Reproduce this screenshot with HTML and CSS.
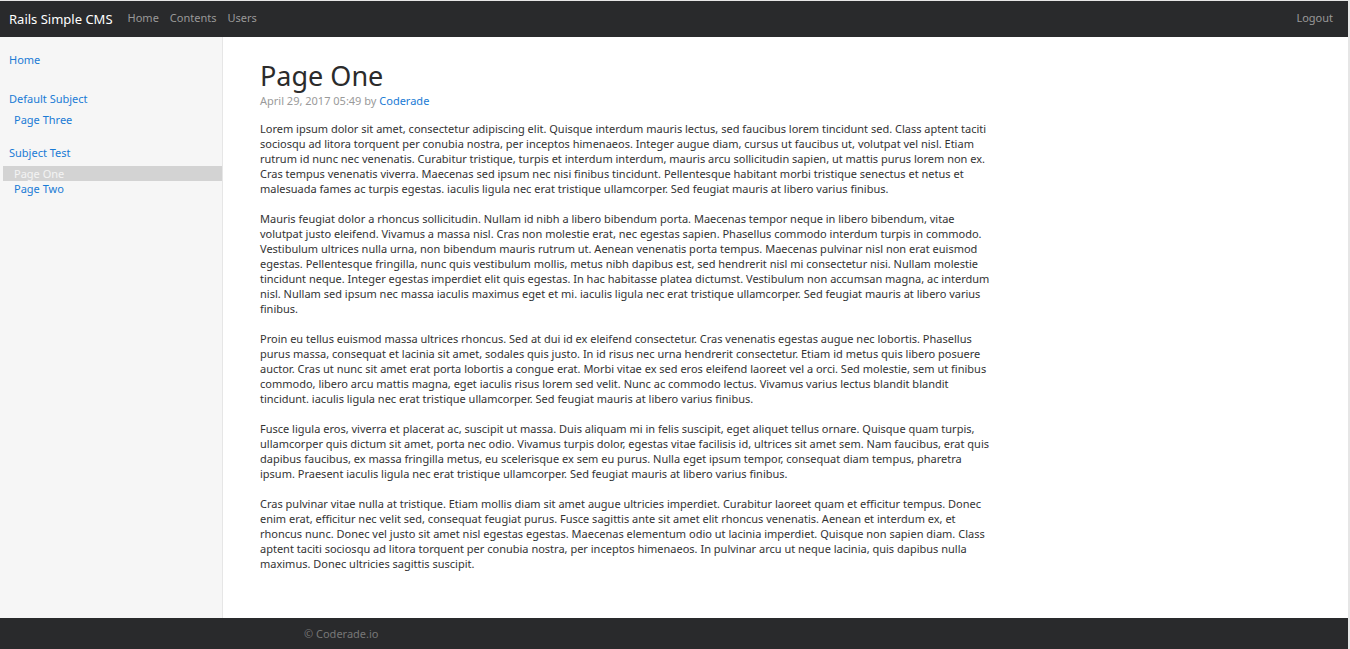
FILE: index.html
```html
<!DOCTYPE html>
<html>
<head>
<meta charset="utf-8">
<title>Rails Simple CMS</title>
<link rel="stylesheet" href="styles.css">
</head>
<body>
<div class="frame">
  <header class="navbar">
    <div class="nav-left">
      <a class="brand" href="#">Rails Simple CMS</a>
      <nav class="nav-links">
        <a href="#">Home</a>
        <a href="#">Contents</a>
        <a href="#">Users</a>
      </nav>
    </div>
    <a class="logout" href="#">Logout</a>
  </header>
  <div class="body-row">
    <aside class="sidebar">
      <a class="side-top" href="#">Home</a>
      <div class="subject">
        <a class="subject-title" href="#">Default Subject</a>
        <a class="page-link" href="#">Page Three</a>
      </div>
      <div class="subject">
        <a class="subject-title" href="#">Subject Test</a>
        <a class="page-link active" href="#">Page One</a>
        <a class="page-link" href="#">Page Two</a>
      </div>
    </aside>
    <main class="content">
      <h1 class="title">Page One</h1>
      <div class="meta">April 29, 2017 05:49 by <a href="#">Coderade</a></div>
      <article class="text">
        <p>Lorem ipsum dolor sit amet, consectetur adipiscing elit. Quisque interdum mauris lectus, sed faucibus lorem tincidunt sed. Class aptent taciti sociosqu ad litora torquent per conubia nostra, per inceptos himenaeos. Integer augue diam, cursus ut faucibus ut, volutpat vel nisl. Etiam rutrum id nunc nec venenatis. Curabitur tristique, turpis et interdum interdum, mauris arcu sollicitudin sapien, ut mattis purus lorem non ex. Cras tempus venenatis viverra. Maecenas sed ipsum nec nisi finibus tincidunt. Pellentesque habitant morbi tristique senectus et netus et malesuada fames ac turpis egestas. iaculis ligula nec erat tristique ullamcorper. Sed feugiat mauris at libero varius finibus.</p>
        <p>Mauris feugiat dolor a rhoncus sollicitudin. Nullam id nibh a libero bibendum porta. Maecenas tempor neque in libero bibendum, vitae volutpat justo eleifend. Vivamus a massa nisl. Cras non molestie erat, nec egestas sapien. Phasellus commodo interdum turpis in commodo. Vestibulum ultrices nulla urna, non bibendum mauris rutrum ut. Aenean venenatis porta tempus. Maecenas pulvinar nisl non erat euismod egestas. Pellentesque fringilla, nunc quis vestibulum mollis, metus nibh dapibus est, sed hendrerit nisl mi consectetur nisi. Nullam molestie tincidunt neque. Integer egestas imperdiet elit quis egestas. In hac habitasse platea dictumst. Vestibulum non accumsan magna, ac interdum nisl. Nullam sed ipsum nec massa iaculis maximus eget et mi. iaculis ligula nec erat tristique ullamcorper. Sed feugiat mauris at libero varius finibus.</p>
        <p>Proin eu tellus euismod massa ultrices rhoncus. Sed at dui id ex eleifend consectetur. Cras venenatis egestas augue nec lobortis. Phasellus purus massa, consequat et lacinia sit amet, sodales quis justo. In id risus nec urna hendrerit consectetur. Etiam id metus quis libero posuere auctor. Cras ut nunc sit amet erat porta lobortis a congue erat. Morbi vitae ex sed eros eleifend laoreet vel a orci. Sed molestie, sem ut finibus commodo, libero arcu mattis magna, eget iaculis risus lorem sed velit. Nunc ac commodo lectus. Vivamus varius lectus blandit blandit tincidunt. iaculis ligula nec erat tristique ullamcorper. Sed feugiat mauris at libero varius finibus.</p>
        <p>Fusce ligula eros, viverra et placerat ac, suscipit ut massa. Duis aliquam mi in felis suscipit, eget aliquet tellus ornare. Quisque quam turpis, ullamcorper quis dictum sit amet, porta nec odio. Vivamus turpis dolor, egestas vitae facilisis id, ultrices sit amet sem. Nam faucibus, erat quis dapibus faucibus, ex massa fringilla metus, eu scelerisque ex sem eu purus. Nulla eget ipsum tempor, consequat diam tempus, pharetra ipsum. Praesent iaculis ligula nec erat tristique ullamcorper. Sed feugiat mauris at libero varius finibus.</p>
        <p>Cras pulvinar vitae nulla at tristique. Etiam mollis diam sit amet augue ultricies imperdiet. Curabitur laoreet quam et efficitur tempus. Donec enim erat, efficitur nec velit sed, consequat feugiat purus. Fusce sagittis ante sit amet elit rhoncus venenatis. Aenean et interdum ex, et rhoncus nunc. Donec vel justo sit amet nisl egestas egestas. Maecenas elementum odio ut lacinia imperdiet. Quisque non sapien diam. Class aptent taciti sociosqu ad litora torquent per conubia nostra, per inceptos himenaeos. In pulvinar arcu ut neque lacinia, quis dapibus nulla maximus. Donec ultricies sagittis suscipit.</p>
      </article>
    </main>
  </div>
  <footer class="footer">
    <span class="copy">© Coderade.io</span>
  </footer>
</div>
</body>
</html>
```

FILE: styles.css
```css
* { box-sizing: border-box; }
html, body { margin: 0; padding: 0; height: 100%; }
body {
  font-family: "Noto Sans", "Open Sans", sans-serif;
  font-size: 11px;
  line-height: 15px;
  color: #333;
  background: #dcdcdc;
}
a { text-decoration: none; color: #1a7bd5; }
.frame {
  display: flex;
  flex-direction: column;
  height: 649px;
  padding-top: 1px;
  padding-right: 2px;
  background: #e6e6e6;
}
.navbar {
  height: 36px;
  flex: none;
  background: #292a2c;
  display: flex;
  align-items: center;
  justify-content: space-between;
  padding: 0 15px 0 9px;
}
.nav-left { display: flex; align-items: center; }
.brand { color: #fff; font-size: 13px; margin-right: 15px; }
.nav-links { display: flex; gap: 11px; position: relative; top: -2px; }
.nav-links a, .logout { color: #999; font-size: 11px; }
.logout { position: relative; top: -2px; }
.body-row { flex: 1; display: flex; background: #fff; min-height: 0; }
.sidebar {
  width: 223px;
  flex: none;
  background: #f6f6f6;
  border-right: 1px solid #e6e6e6;
  padding: 15px 0 0 3px;
  display: flex;
  flex-direction: column;
}
.sidebar a { display: block; }
.side-top { padding-left: 6px; line-height: 15px; margin-bottom: 24px; }
.subject { display: flex; flex-direction: column; margin-bottom: 18px; }
.subject-title { padding-left: 6px; line-height: 15px; margin-bottom: 6px; }
.page-link { padding-left: 11px; line-height: 15px; }
.page-link.active {
  background: #d3d3d3;
  color: #f4f4f4;
  padding-top: 1px;
  line-height: 14px;
}
.content { flex: 1; padding: 22px 0 0 37px; }
.title {
  margin: 0;
  font-size: 27px;
  font-weight: 400;
  line-height: 34px;
  color: #2b2b2b;
}
.meta { color: #9a9a9a; margin-top: 0; }
.text { width: 735px; margin-top: 13px; }
.text p { margin: 0 0 15px; }
.footer {
  height: 31px;
  flex: none;
  background: #292a2c;
  display: flex;
  align-items: center;
  padding-left: 304px;
}
.copy { color: #777; font-size: 11px; }
```
